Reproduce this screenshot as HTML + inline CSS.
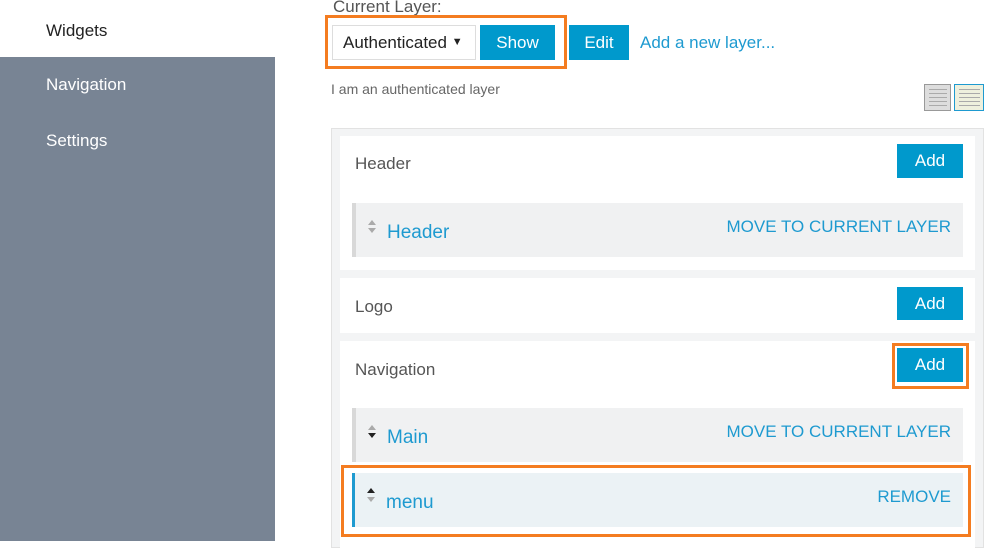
<!DOCTYPE html><html><head><style>
body{margin:0;width:999px;height:541px;overflow:hidden;background:#fff;font-family:"Liberation Sans",sans-serif;position:relative}
.a{position:absolute}
.side{left:0;top:0;width:275px;height:541px;background:#788494}
.si{color:#fff;font-size:17px;left:46px}
.btn{background:#0099cc;color:#fff;font-size:17px;text-align:center;position:absolute}
.panel{background:#fff;position:absolute;left:340px;width:635px}
.ptitle{position:absolute;left:15px;font-size:17px;color:#555}
.item{position:absolute;left:12px;width:611px;height:54px;background:#f0f1f2;border-left:4px solid #d8d8d8;box-sizing:border-box}
.item .n{position:absolute;left:31px;top:19px;font-size:19px;color:#1e9ad0}
.item .r{position:absolute;right:12px;top:14px;font-size:17px;color:#1e9ad0}
.up{position:absolute;left:12px;border-left:4px solid transparent;border-right:4px solid transparent;border-bottom:5px solid #aaa}
.dn{position:absolute;left:12px;border-left:4px solid transparent;border-right:4px solid transparent;border-top:5px solid #aaa}
</style></head><body>
<div class="a side"></div>
<div class="a" style="left:0;top:0;width:275px;height:57px;background:#fff"></div>
<div class="a si" style="top:21px;color:#222">Widgets</div>
<div class="a si" style="top:75px">Navigation</div>
<div class="a si" style="top:131px">Settings</div>

<div class="a" style="left:333px;top:-3px;font-size:17px;color:#555">Current Layer:</div>
<div class="a" style="left:325px;top:15px;width:236px;height:48px;border:3px solid #f47c20"></div>
<div class="a" style="left:332px;top:25px;width:142px;height:33px;border:1px solid #ddd;background:#fff"></div>
<div class="a" style="left:343px;top:33px;font-size:17px;color:#222">Authenticated <span style="font-size:11px;vertical-align:3px">▼</span></div>
<div class="btn" style="left:480px;top:25px;width:75px;height:35px;line-height:35px">Show</div>
<div class="btn" style="left:569px;top:25px;width:60px;height:35px;line-height:35px">Edit</div>
<div class="a" style="left:640px;top:33px;font-size:17px;color:#1e9ad0">Add a new layer...</div>
<div class="a" style="left:331px;top:81px;font-size:14px;color:#666">I am an authenticated layer</div>
<div class="a" style="left:924px;top:84px;width:27px;height:27px;background:#ddd;border:1px solid #999;box-sizing:border-box"></div>
<div class="a" style="left:954px;top:84px;width:30px;height:27px;background:#eef0dd;border:1px solid #1e9ad0;box-sizing:border-box"></div>
<div class="a" style="left:929px;top:89px;width:18px;height:17px;background:repeating-linear-gradient(#aaa 0 1px,#ddd 1px 4px)"></div>
<div class="a" style="left:959px;top:89px;width:21px;height:17px;background:repeating-linear-gradient(#aaa 0 1px,#eef0dd 1px 4px)"></div>

<div class="a" style="left:331px;top:128px;width:653px;height:420px;background:#f3f4f5;border:1px solid #e2e2e2;box-sizing:border-box"></div>

<div class="panel" style="top:136px;height:134px">
<div class="ptitle" style="top:18px">Header</div>
<div class="btn" style="left:557px;top:8px;width:66px;height:34px;line-height:34px">Add</div>
<div class="item" style="top:67px"><div class="up" style="top:17px"></div><div class="dn" style="top:25px"></div><div class="n">Header</div><div class="r">MOVE TO CURRENT LAYER</div></div>
</div>
<div class="panel" style="top:278px;height:55px">
<div class="ptitle" style="top:19px">Logo</div>
<div class="btn" style="left:557px;top:9px;width:66px;height:33px;line-height:33px">Add</div>
</div>
<div class="panel" style="top:341px;height:210px">
<div class="ptitle" style="top:19px">Navigation</div>
<div class="a" style="left:552px;top:2px;width:71px;height:40px;border:3px solid #f47c20"></div>
<div class="btn" style="left:557px;top:7px;width:66px;height:34px;line-height:34px">Add</div>
<div class="item" style="top:67px"><div class="up" style="top:17px"></div><div class="dn" style="top:25px;border-top-color:#222"></div><div class="n">Main</div><div class="r">MOVE TO CURRENT LAYER</div></div>
<div class="a" style="left:1px;top:124px;width:624px;height:66px;border:3px solid #f47c20"></div>
<div class="item" style="top:132px;background:#ebf2f5;border-left-color:#1e9ad0;border-left-width:3px"><div class="up" style="top:15px;border-bottom-color:#222"></div><div class="dn" style="top:24px"></div><div class="n">menu</div><div class="r">REMOVE</div></div>
</div>
</body></html>
